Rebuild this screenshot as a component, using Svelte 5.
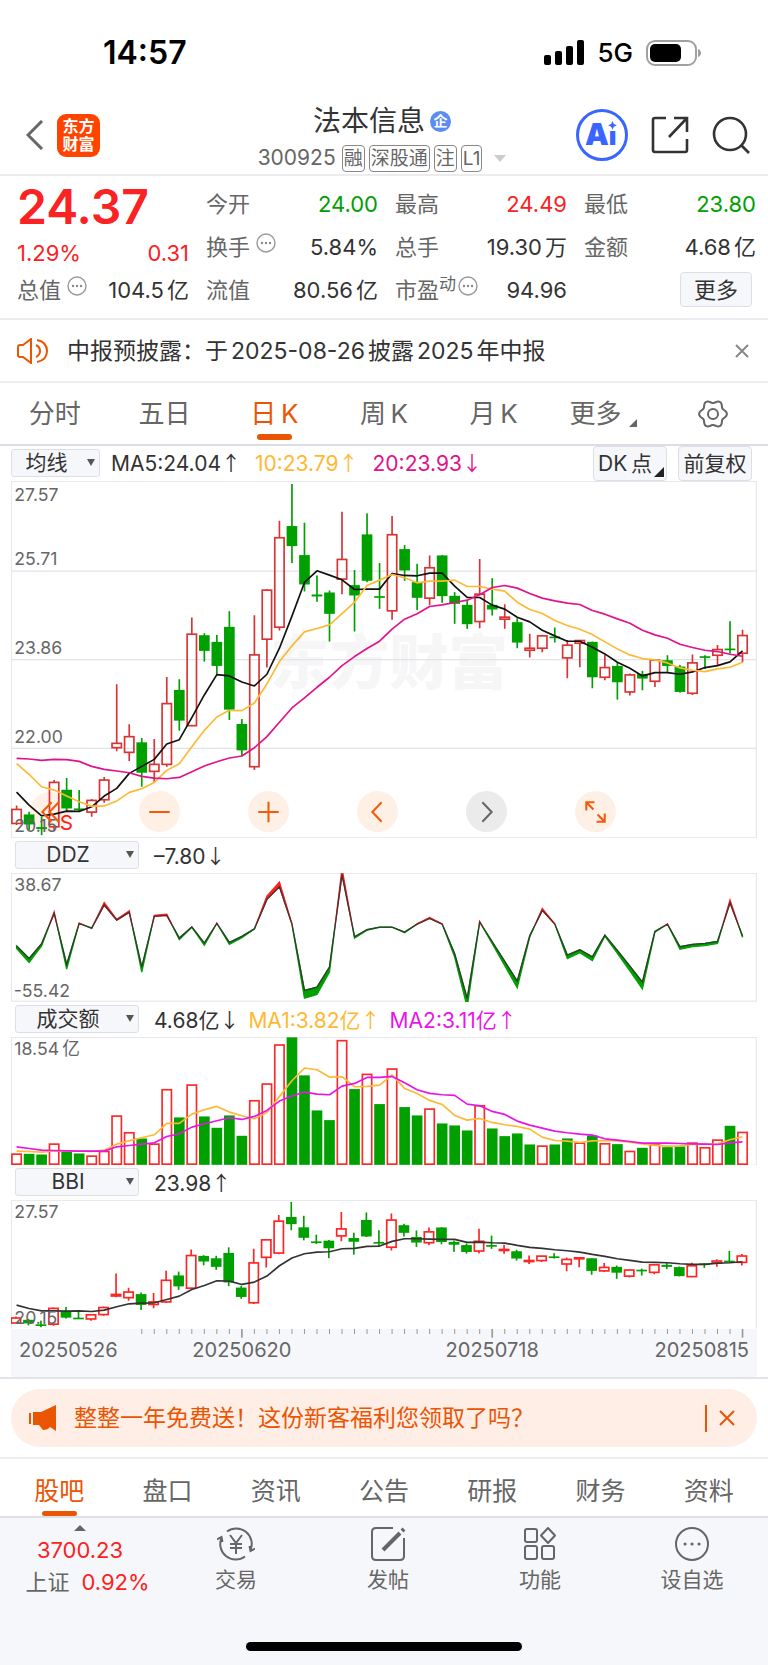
<script lang="ts">
    const STEP = 37.5;
    const START = 51.7;
    const x = (i: number) => START + i * STEP;

    // high, body top, body bottom, low in plot units; up = hollow red
    type Candle = [number, number, number, number, "up" | "down"];
    const candles: Candle[] = [
        [991, 1003, 1045, 1050, "up"], [1010, 1018, 1048, 1065, "down"], [1025, 1056, 1062, 1080, "down"],
        [915, 922, 1055, 1068, "up"], [909, 944, 1000, 1008, "down"], [945, 1000, 1004, 1008, "down"],
        [972, 976, 1011, 1025, "up"], [906, 915, 974, 983, "up"], [628, 805, 818, 829, "up"],
        [748, 785, 832, 858, "up"], [789, 802, 893, 935, "down"], [792, 868, 889, 921, "up"],
        [606, 686, 868, 875, "up"], [613, 645, 737, 767, "down"], [428, 478, 752, 754, "up"],
        [475, 481, 528, 560, "down"], [480, 501, 573, 598, "down"], [409, 456, 704, 735, "down"],
        [732, 747, 826, 842, "down"], [421, 540, 875, 885, "up"], [343, 346, 493, 578, "up"],
        [138, 189, 457, 467, "up"], [28, 154, 214, 265, "down"], [144, 241, 329, 350, "down"],
        [302, 359, 365, 381, "down"], [347, 353, 417, 500, "down"], [111, 254, 313, 358, "up"],
        [286, 331, 362, 470, "down"], [116, 179, 318, 322, "down"], [265, 364, 369, 402, "down"],
        [124, 180, 408, 435, "up"], [211, 223, 287, 318, "down"], [267, 322, 369, 406, "down"],
        [242, 279, 370, 391, "up"], [241, 242, 364, 384, "down"], [352, 363, 387, 447, "down"],
        [376, 390, 448, 462, "down"], [253, 358, 440, 460, "up"], [310, 390, 404, 422, "down"],
        [388, 427, 433, 462, "up"], [430, 442, 503, 520, "down"], [477, 520, 526, 548, "up"],
        [480, 483, 520, 532, "up"], [458, 485, 489, 503, "down"], [495, 511, 549, 610, "up"],
        [495, 497, 505, 577, "up"], [500, 501, 607, 640, "down"], [540, 578, 607, 616, "up"],
        [562, 573, 622, 674, "down"], [596, 600, 651, 662, "up"], [588, 597, 611, 646, "down"],
        [553, 556, 619, 636, "up"], [541, 556, 573, 592, "down"], [570, 575, 651, 653, "down"],
        [539, 564, 655, 660, "up"], [541, 544, 548, 582, "down"], [510, 524, 541, 572, "up"],
        [439, 521, 525, 536, "down"], [465, 482, 535, 562, "up"]
    ];

    const ma5 = [951, 990, 1022, 1017, 1008, 1009, 995, 963, 940, 895, 874, 853, 807, 794, 728, 660, 599, 603, 621, 633, 598, 520, 424, 323, 288, 301, 315, 344, 343, 343, 296, 302, 303, 295, 295, 334, 368, 368, 391, 403, 427, 441, 466, 483, 499, 499, 517, 537, 562, 580, 603, 593, 593, 598, 591, 578, 572, 561, 528];
    const ma10 = [866, 898, 935, 945, 963, 980, 993, 993, 978, 952, 941, 922, 886, 866, 815, 766, 726, 706, 707, 684, 627, 560, 513, 471, 461, 450, 416, 382, 332, 316, 299, 309, 324, 319, 319, 316, 335, 335, 343, 349, 382, 404, 416, 437, 452, 463, 479, 501, 522, 540, 551, 555, 564, 579, 586, 590, 582, 577, 562];
    const ma20 = [850, 852, 856, 853, 854, 859, 874, 883, 888, 893, 904, 909, 911, 907, 890, 873, 860, 849, 843, 818, 785, 742, 699, 669, 637, 607, 572, 545, 521, 499, 463, 433, 417, 395, 390, 383, 376, 360, 338, 332, 340, 356, 370, 378, 385, 389, 407, 418, 432, 445, 466, 480, 490, 508, 518, 526, 530, 538, 544];
    const ddz = [320, 357, 313, 222, 375, 252, 266, 197, 242, 219, 383, 231, 228, 296, 263, 311, 252, 309, 291, 268, 180, 142, 254, 453, 443, 383, 106, 292, 271, 263, 263, 278, 254, 237, 254, 343, 477, 248, 307, 366, 425, 289, 213, 254, 347, 331, 352, 287, 333, 380, 428, 276, 254, 322, 315, 312, 306, 190, 290];
    // negative = falling day
    const volume = [941, -940, -942, 911, -933, -939, 947, 933, 827, 877, -894, 911, 748, -831, 734, -828, -862, -825, -886, 781, 731, 614, -591, -705, -810, -839, 601, -746, 702, -791, 686, -800, -825, 806, -849, -855, -870, 796, -864, -887, -879, -912, 917, -912, -894, 908, -885, 910, -911, 933, -922, 914, -920, -918, 908, 922, 899, -856, 876];
    const volMa1 = [932, 933, 935, 931, 932, 932, 933, 929, 911, 901, 892, 883, 849, 849, 821, 808, 798, 815, 826, 835, 816, 768, 721, 683, 688, 710, 709, 739, 738, 734, 704, 744, 759, 780, 792, 825, 839, 834, 846, 853, 858, 866, 890, 900, 902, 906, 901, 900, 901, 905, 910, 915, 917, 916, 912, 911, 910, 898, 889];
    const volMa2 = [919, 924, 929, 930, 931, 932, 932, 932, 919, 915, 911, 907, 888, 880, 860, 850, 841, 832, 837, 828, 810, 782, 767, 755, 761, 763, 737, 729, 711, 711, 708, 727, 748, 759, 763, 765, 791, 796, 813, 822, 842, 854, 863, 872, 877, 881, 884, 895, 899, 903, 908, 908, 908, 909, 910, 911, 912, 907, 904];
    const bbi = [419, 429, 436, 436, 437, 436, 438, 434, 424, 415, 413, 412, 402, 392, 372, 360, 346, 347, 357, 350, 332, 301, 278, 265, 260, 259, 250, 249, 243, 242, 228, 220, 220, 221, 222, 222, 231, 230, 232, 233, 240, 246, 249, 253, 256, 260, 267, 273, 280, 285, 290, 291, 292, 295, 297, 297, 293, 292, 289];

    const line = (values: number[]) => values.map((v, i) => `${x(i)},${v}`).join(" ");

    // DDZ: band between the line and its exaggerated copy around zero
    const ZERO = 259;
    const ddzFar = ddz.map((v) => v + (v - ZERO) * 0.12);
    const ddzBand =
        line(ddz) + " " + ddzFar.map((v, i) => `${x(i)},${v}`).reverse().join(" ");

    const small = (v: number) => 110 + (v - 28) * 0.3565;
    const bbiCandles = candles.map(([h, t, b, l, dir]) => [small(h), small(t), small(b), small(l), dir] as Candle);

    // six-lobed outline of the settings icon
    const gear = Array.from({ length: 72 }, (_, k) => {
        const a = (k * Math.PI) / 36;
        const r = 12.4 + 1.5 * Math.cos(6 * a);
        return `${(15 + r * Math.cos(a)).toFixed(1)},${(15 + r * Math.sin(a)).toFixed(1)}`;
    }).join(" ");

    const priceLabels = [
        { y: 78, text: "27.57" },
        { y: 270, text: "25.71" },
        { y: 537, text: "23.86" },
        { y: 804, text: "22.00" },
        { y: 1071, text: "20.15" }
    ];

    const quotes = [
        { label: "今开", value: "24.00", color: "green" },
        { label: "最高", value: "24.49", color: "red" },
        { label: "最低", value: "23.80", color: "green" },
        { label: "换手", value: "5.84%", info: true },
        { label: "总手", value: "19.30", unit: "万" },
        { label: "金额", value: "4.68", unit: "亿" },
        { label: "流值", value: "80.56", unit: "亿" },
        { label: "市盈", sup: "动", value: "94.96", info: true }
    ];

    const periods = ["分时", "五日", "日\u2009K", "周\u2009K", "月\u2009K", "更多"];
    const sections = ["股吧", "盘口", "资讯", "公告", "研报", "财务", "资料"];
    const tags = ["融", "深股通", "注", "L1"];
    let period = $state(periods[2]);
    let section = $state("股吧");
    let showNotice = $state(true);
    let showPromo = $state(true);
</script>

{#snippet dots()}
    <svg class="dots" viewBox="0 0 20 20" aria-hidden="true">
        <circle cx="10" cy="10" r="9" fill="none" stroke="#999" stroke-width="1.4" />
        <circle cx="6" cy="10" r="1.2" fill="#888" />
        <circle cx="10" cy="10" r="1.2" fill="#888" />
        <circle cx="14" cy="10" r="1.2" fill="#888" />
    </svg>
{/snippet}

{#snippet sticks(list: Candle[], red: string, shift: number)}
    {#each list as [high, top, bottom, low, dir], i}
        {#if dir == "up"}
            <g stroke={red} stroke-width="5" fill="none">
                <path d="M{x(i) + shift} {high}V{top}M{x(i) + shift} {bottom}V{low}" />
                <rect x={x(i) + shift - 14} y={top} width="28" height={Math.max(bottom - top, 3)} />
            </g>
        {:else}
            <g fill="#00a000">
                <rect x={x(i) + shift - 2.5} y={high} width="5" height={low - high} />
                <rect x={x(i) + shift - 16} y={top} width="32" height={Math.max(bottom - top, 5)} />
            </g>
        {/if}
    {/each}
{/snippet}

<div class="phone">
    <div class="status">
        <span class="clock">14:57</span>
        <div class="signals">
            <svg width="40" height="25" viewBox="0 0 40 25" aria-hidden="true">
                <rect x="0" y="15" width="7" height="10" rx="2" />
                <rect x="11" y="11" width="7" height="14" rx="2" />
                <rect x="22" y="6" width="7" height="19" rx="2" />
                <rect x="33" y="0" width="7" height="25" rx="2" />
            </svg>
            <span class="network">5G</span>
            <svg width="56" height="26" viewBox="0 0 56 26" aria-hidden="true">
                <rect x="1" y="1" width="49" height="24" rx="8" fill="none" stroke="#a0a0a0" stroke-width="2" />
                <rect x="4" y="4" width="31" height="18" rx="5" />
                <path d="M52 9c4 1 4 7 0 8z" fill="#a0a0a0" />
            </svg>
        </div>
    </div>

    <header class="nav">
        <div class="nav-left">
            <button aria-label="返回">
                <svg width="18" height="30" viewBox="0 0 18 30"><path d="M16 1 2 15l14 14" fill="none" stroke="#666" stroke-width="3" /></svg>
            </button>
            <a class="logo" href="#home">东方<br />财富</a>
        </div>
        <div class="title">
            <h1>法本信息<span class="badge">企</span></h1>
            <div class="code">
                <span class="number">300925</span>
                {#each tags as tag}
                    <span class="tag">{tag}</span>
                {/each}
                <i class="caret"></i>
            </div>
        </div>
        <div class="nav-right">
            <button aria-label="Ai">
                <svg width="52" height="52" viewBox="0 0 52 52">
                    <circle cx="26" cy="26" r="24.500" fill="none" stroke="#3a66ff" stroke-width="3" />
                    <text x="9" y="36" class="ai">A<tspan class="stem">ı</tspan></text>
                    <path d="M36.500 12l1.400 2.900 2.900 1.400-2.900 1.400-1.400 2.900-1.400-2.900-2.900-1.400 2.900-1.400z" fill="#3a66ff" />
                </svg>
            </button>
            <button aria-label="分享">
                <svg width="38" height="38" viewBox="0 0 38 38" fill="none" stroke="#333" stroke-width="2.600">
                    <path d="M15 2H4Q2 2 2 4V34Q2 36 4 36H34Q36 36 36 34V23M23 2H36V16M36 2 18 21" />
                </svg>
            </button>
            <button aria-label="搜索">
                <svg width="38" height="38" viewBox="0 0 38 38" fill="none" stroke="#333" stroke-width="2.600">
                    <circle cx="18" cy="18" r="16" />
                    <path d="M29 29 37 37" />
                </svg>
            </button>
        </div>
    </header>

    <section class="quote">
        <div class="last">
            <strong>24.37</strong>
            <div class="pair red"><span>1.29%</span><span>0.31</span></div>
            <div class="pair"><span class="label">总值{@render dots()}</span><span>104.5<small>亿</small></span></div>
        </div>
        <div class="stats">
            {#each quotes as q}
                <div class="pair">
                    <span class="label">{q.label}{#if q.sup}<sup>{q.sup}</sup>{/if}{#if q.info}{@render dots()}{/if}</span>
                    <span class={q.color}>{q.value}{#if q.unit}<small>{q.unit}</small>{/if}</span>
                </div>
            {/each}
            <button class="more">更多</button>
        </div>
    </section>

    {#if showNotice}
        <div class="notice">
            <svg width="32" height="26" viewBox="0 0 32 26" fill="none" stroke="#ea5504" stroke-width="2" aria-hidden="true">
                <path d="M14 1 6 7H3Q1 7 1 9V17Q1 19 3 19H6L14 25ZM19 7Q23 9 23 13T19 19M20 2Q30 4 30 13T20 24" />
            </svg>
            <p>中报预披露：于<span>2025-08-26</span>披露<span>2025</span>年中报</p>
            <button aria-label="关闭公告" onclick={() => (showNotice = false)}>
                <svg width="14" height="14" viewBox="0 0 14 14"><path d="M1 1 13 13M13 1 1 13" stroke="#888" stroke-width="2" /></svg>
            </button>
        </div>
    {/if}

    <nav class="periods">
        {#each periods as p}
            <button class:active={period == p} onclick={() => (period = p)}>
                {p}{#if p == "更多"}<i class="corner"></i>{/if}
            </button>
        {/each}
        <button aria-label="设置">
            <svg width="30" height="30" viewBox="0 0 30 30" fill="none" stroke="#666" stroke-width="2">
                <polygon points={gear} stroke-linejoin="round" />
                <circle cx="15" cy="15" r="5" />
            </svg>
        </button>
    </nav>

    <div class="toolbar">
        <span class="drop">
            <select aria-label="主图指标"><option>均线</option></select>
        </span>
        <span class="reading">MA5:24.04<b>↑</b></span>
        <span class="reading orange">10:23.79<b>↑</b></span>
        <span class="reading pink">20:23.93<b>↓</b></span>
        <button class="chip dk">DK{"\u2009"}点<i class="corner"></i></button>
        <button class="chip">前复权</button>
    </div>

    <div class="panel">
        <svg class="plot" viewBox="35 19 2235 1071" role="img" aria-label="日K线">
            <text class="watermark" x="812" y="628">东方财富</text>
            <path d="M35 289H2270M35 554H2270M35 820H2270" stroke="#dfe3ec" stroke-width="4" />
            <rect class="frame" x="36" y="20" width="2232" height="1068" />
            <circle cx="152" cy="1011" r="61" fill="#fff0e8" />
            {@render sticks(candles, "#d83434", 0)}
            <polyline class="ma" points={line(ma5)} stroke="#111" />
            <polyline class="ma" points={line(ma10)} stroke="#ffb833" />
            <polyline class="ma" points={line(ma20)} stroke="#e0128c" />
            {#each priceLabels as l}
                <text class="axis" x="45" y={l.y}>{l.text}</text>
            {/each}
            <text class="sell" x="181" y="1065">S</text>
        </svg>
        <div class="controls">
            <button class="ghost" aria-label="最左"><svg viewBox="0 0 40 40"><path d="M21 11 12 20.500 21 30M28 11 19 20.500 28 30" /></svg></button>
            <button aria-label="缩小"><svg viewBox="0 0 40 40"><path d="M10 20.500H30" /></svg></button>
            <button aria-label="放大"><svg viewBox="0 0 40 40"><path d="M10 20.500H30M20 10.500V30.500" /></svg></button>
            <button aria-label="左移"><svg viewBox="0 0 40 40"><path d="M24 11 15 20.500 24 30" /></svg></button>
            <button class="off" aria-label="右移"><svg viewBox="0 0 40 40"><path d="M16 11 25 20.500 16 30" /></svg></button>
            <button aria-label="全屏"><svg viewBox="0 0 40 40"><path d="M19 11H11V19M11 11 18 18M21 30H29V22M29 30 22 23" /></svg></button>
        </div>
    </div>

    <div class="sub">
        <span class="drop wide"><select aria-label="副图一"><option>DDZ</option></select></span>
        <span class="reading">–7.80<b>↓</b></span>
    </div>
    <div class="panel">
        <svg class="plot" viewBox="35 101 2235 385" role="img" aria-label="DDZ">
            <defs>
                <linearGradient id="ddz" gradientUnits="userSpaceOnUse" x1="0" x2="0" y1="101" y2="486">
                    <stop offset="0.41" stop-color="#ff2020" />
                    <stop offset="0.41" stop-color="#00a000" />
                </linearGradient>
            </defs>
            <rect class="frame" x="36" y="102" width="2232" height="383" />
            <polygon points={ddzBand} fill="url(#ddz)" stroke="url(#ddz)" stroke-width="4" />
            <polyline points={line(ddz)} fill="none" stroke="#333" stroke-width="4" stroke-opacity="0.9" />
            <text class="axis" x="45" y="154">38.67</text>
            <text class="axis" x="43" y="472">-55.42</text>
        </svg>
    </div>

    <div class="sub">
        <span class="drop wide"><select aria-label="副图二"><option>成交额</option></select></span>
        <span class="reading">4.68亿<b>↓</b></span>
        <span class="reading orange">MA1:3.82亿<b>↑</b></span>
        <span class="reading magenta">MA2:3.11亿<b>↑</b></span>
    </div>
    <div class="panel">
        <svg class="plot" viewBox="35 590 2235 385" role="img" aria-label="成交额">
            <rect class="frame" x="36" y="591" width="2232" height="383" />
            {#each volume as v, i}
                {#if v > 0}
                    <rect x={x(i) - 14} y={v} width="28" height={971 - v} fill="#fff" stroke="#f92a2a" stroke-width="5" />
                {:else}
                    <rect x={x(i) - 16} y={-v} width="32" height={973 + v} fill="#00a000" />
                {/if}
            {/each}
            <polyline class="ma" points={line(volMa1)} stroke="#ffb833" />
            <polyline class="ma" points={line(volMa2)} stroke="#e815e8" />
            <text class="axis" x="45" y="644">18.54{"\u2009"}亿</text>
        </svg>
    </div>

    <div class="sub">
        <span class="drop wide"><select aria-label="副图三"><option>BBI</option></select></span>
        <span class="reading">23.98<b>↑</b></span>
    </div>
    <div class="panel">
        <svg class="plot" viewBox="35 104 2235 385" role="img" aria-label="BBI">
            <path d="M36 489V105H2268V489" fill="none" stroke="#e2e4ea" stroke-width="3" />
            {@render sticks(bbiCandles, "#ff2424", -2)}
            <polyline class="ma" points={line(bbi)} stroke="#333" />
            <text class="axis" x="45" y="158">27.57</text>
            <text class="axis" x="45" y="477">20.15</text>
        </svg>
        <svg class="dates" viewBox="35 0 2235 144" role="img" aria-label="日期">
            {#each candles as _, i}
                {#if i > 9}
                    <path d="M{x(i)} 0V{i % 20 == 18 ? 26 : 15}" stroke="#999" stroke-width={i % 20 == 18 ? 5 : 3} />
                {/if}
            {/each}
            <text x="59" y="83">20250526</text>
            <text x={x(18)} y="83" text-anchor="middle">20250620</text>
            <text x={x(38)} y="83" text-anchor="middle">20250718</text>
            <text x="2246" y="83" text-anchor="end">20250815</text>
        </svg>
    </div>

    {#if showPromo}
        <div class="promo-wrap">
            <div class="promo">
                <svg width="28" height="26" viewBox="0 0 28 26" fill="#ea5504" aria-hidden="true">
                    <path d="M0 8H2V19H0ZM4 7H12L27 0V26L21 22Q19 25 14 25L10 20H4Z" />
                </svg>
                <a href="#promo">整整一年免费送！这份新客福利您领取了吗？</a>
                <button aria-label="关闭" onclick={() => (showPromo = false)}>
                    <svg width="16" height="16" viewBox="0 0 16 16"><path d="M1 1 15 15M15 1 1 15" stroke="#ea5504" stroke-width="2" /></svg>
                </button>
            </div>
        </div>
    {/if}

    <nav class="sections">
        {#each sections as s}
            <button class:active={section == s} onclick={() => (section = s)}>{s}</button>
        {/each}
    </nav>

    <footer>
        <div class="actions">
            <a class="index" href="#index">
                <i class="up"></i>
                <span>3700.23</span>
                <span class="change"><em>上证</em>0.92%</span>
            </a>
            <a href="#trade">
                <svg viewBox="0 0 38 36">
                    <path d="M10 5.500A15.500 15.500 0 0 1 33.500 24M28 30.500A15.500 15.500 0 0 1 4.500 12M0 13.500 4.500 11 5.500 16M38 22.500 33.500 25 32.500 20" />
                    <path d="M13 9 19 17 25 9M19 17V28M13 18H25M13 22H25" />
                </svg>
                <span>交易</span>
            </a>
            <a href="#post">
                <svg viewBox="0 0 38 36">
                    <path d="M24 2H7Q3 2 3 6V30Q3 34 7 34H31Q35 34 35 30V12" />
                    <path d="M14 24 31 7M33 5 35 3" stroke-width="4" />
                </svg>
                <span>发帖</span>
            </a>
            <a href="#tools">
                <svg viewBox="0 0 38 36">
                    <rect x="4" y="3" width="12" height="13" rx="2" />
                    <rect x="4" y="20" width="12" height="13" rx="2" />
                    <rect x="21" y="20" width="12" height="13" rx="2" />
                    <path d="M27 2 34 9.500 27 17 20 9.500Z" stroke-linejoin="round" />
                </svg>
                <span>功能</span>
            </a>
            <a href="#watch">
                <svg viewBox="0 0 38 36">
                    <circle cx="19" cy="18" r="16" />
                    <path d="M12 18h.1M19 18h.1M26 18h.1" stroke-width="3" stroke-linecap="round" />
                </svg>
                <span>设自选</span>
            </a>
        </div>
        <div class="home"></div>
    </footer>
</div>

<style>
    :global(body) {
        background: #fff;
    }

    .phone {
        font-family: Inter, "Noto Sans CJK SC", sans-serif;
        font-size: 22px;
        line-height: 30px;
        color: #333;
        overflow: hidden;
    }

    .phone * {
        box-sizing: border-box;
    }

    button {
        padding: 0;
        border: 0;
        background: none;
        font: inherit;
        color: inherit;
        cursor: pointer;
    }

    a {
        color: inherit;
        text-decoration: none;
    }

    svg {
        display: block;
    }

    .red {
        color: #fa2222;
    }

    .green {
        color: #00a000;
    }

    .orange {
        color: #ffb833;
    }

    .pink {
        color: #e0128c;
    }

    .magenta {
        color: #e815e8;
    }

    .status {
        display: flex;
        justify-content: space-between;
        align-items: center;
        height: 96px;
        padding: 9px 66px 0 103px;
        color: #000;
    }

    .clock {
        font-size: 32px;
        font-weight: 600;
    }

    .signals {
        display: flex;
        align-items: center;
        gap: 13px;
    }

    .network {
        font-size: 26px;
        font-weight: 500;
    }

    .nav {
        display: grid;
        grid-template-columns: 1fr auto 1fr;
        align-items: center;
        height: 80px;
        padding: 0 18px 0 26px;
        border-bottom: 2px solid #ececee;
    }

    .nav-left {
        display: flex;
        align-items: center;
        gap: 13px;
    }

    .logo {
        width: 43px;
        height: 43px;
        padding-top: 3px;
        border-radius: 9px;
        background: #ff4400;
        color: #fff;
        font-size: 16px;
        font-weight: 700;
        line-height: 18px;
        text-align: center;
    }

    .title {
        padding: 4px 12px 0 0;
    }

    h1 {
        display: flex;
        justify-content: center;
        align-items: center;
        gap: 5px;
        margin: 0 0 2px;
        font-size: 28px;
        font-weight: 400;
        line-height: 40px;
    }

    .badge {
        width: 21px;
        height: 21px;
        border-radius: 50%;
        background: #5b8def;
        color: #fff;
        font-size: 14px;
        font-weight: 700;
        line-height: 20px;
        text-align: center;
    }

    .code {
        display: flex;
        align-items: center;
        gap: 4px;
        color: #666;
    }

    .number {
        margin-right: 2px;
        font-size: 21px;
    }

    .tag {
        height: 27px;
        padding: 0 1px;
        border: 1px solid #888;
        border-radius: 4px;
        font-size: 19px;
        line-height: 25px;
    }

    .caret {
        margin-left: 8px;
        border: 6px solid transparent;
        border-top: 7px solid #ccc;
        border-bottom: 0;
    }

    .nav-right {
        display: flex;
        justify-content: flex-end;
        align-items: center;
        gap: 23px;
    }

    .ai {
        fill: #3a66ff;
        font-size: 30px;
        font-weight: 900;
    }

    .stem {
        font-size: 26px;
    }

    .quote {
        display: grid;
        grid-template-columns: repeat(4, minmax(0, 1fr));
        gap: 17px;
        height: 144px;
        padding: 6px 12px 0 17px;
        border-bottom: 2px solid #ececee;
    }

    .last {
        display: grid;
        grid-template-rows: 50px 37px 43px;
    }

    .last strong {
        color: #fa2222;
        font-size: 48px;
        font-weight: 600;
        line-height: 50px;
    }

    .stats {
        grid-column: span 3;
        display: grid;
        grid-template-columns: repeat(3, minmax(0, 1fr));
        grid-template-rows: repeat(3, 43px);
        column-gap: 17px;
    }

    .pair {
        display: flex;
        justify-content: space-between;
        align-items: center;
        white-space: nowrap;
    }

    .last .pair {
        height: 41px;
    }

    .label {
        display: flex;
        align-items: center;
        color: #666;
    }

    .label sup {
        align-self: flex-start;
        font-size: 17px;
        line-height: 18px;
    }

    .dots {
        width: 20px;
        height: 20px;
        margin: 0 0 8px 6px;
    }

    sup + .dots {
        margin-left: 2px;
    }

    .pair small {
        margin-left: 3px;
        font-size: 22px;
    }

    .more {
        justify-self: end;
        align-self: center;
        width: 72px;
        height: 35px;
        margin-right: 4px;
        border: 1px solid #dcdfe5;
        border-radius: 4px;
        background: #f6f7fa;
    }

    .notice {
        display: flex;
        align-items: center;
        height: 63px;
        padding: 0 19px 0 17px;
        border-bottom: 2px solid #ececee;
    }

    .notice p {
        flex: 1;
        margin: 0 0 0 18px;
        font-size: 23px;
    }

    .notice span {
        margin: 0 3px;
    }

    .periods {
        display: grid;
        grid-template-columns: repeat(7, 1fr);
        height: 63px;
        border-bottom: 2px solid #dcdce4;
        color: #666;
        font-size: 26px;
    }

    .periods button,
    .sections button {
        display: flex;
        justify-content: center;
        align-items: center;
        position: relative;
    }

    .periods .active,
    .sections .active {
        color: #ea5504;
    }

    .active::after {
        content: "";
        position: absolute;
        bottom: 4px;
        width: 35px;
        height: 6px;
        border-radius: 3px;
        background: #ea5504;
    }

    .corner {
        align-self: flex-end;
        border-left: 8px solid transparent;
        border-bottom: 8px solid #666;
    }

    .periods .corner {
        margin: 0 0 17px 8px;
    }

    .toolbar,
    .sub {
        display: flex;
        align-items: center;
        height: 35px;
        white-space: nowrap;
    }

    .toolbar {
        padding: 0 16px 0 11px;
    }

    .sub {
        padding: 0 15px;
    }

    .drop {
        position: relative;
        width: 89px;
        height: 28px;
        margin: 0 11px 1px 0;
    }

    .drop.wide {
        width: 124px;
        margin-right: 15px;
    }

    .drop::after {
        content: "";
        position: absolute;
        top: 10px;
        right: 5px;
        border: 4px solid transparent;
        border-top: 7px solid #555;
        border-bottom: 0;
        pointer-events: none;
    }

    select {
        display: block;
        width: 100%;
        height: 100%;
        padding: 0 18px 0 0;
        border: 1px solid #dcdfe5;
        border-radius: 3px;
        background: #f6f7fa;
        appearance: none;
        color: #333;
        font: 21px/26px Inter, "Noto Sans CJK SC", sans-serif;
        text-align: center;
        text-align-last: center;
    }

    .reading {
        margin-right: 14px;
        font-size: 21px;
    }

    .sub .reading {
        margin: 2px 9px 0 0;
    }

    .reading b {
        font-family: "Noto Sans CJK SC", sans-serif;
        font-size: 20px;
        font-weight: 400;
    }

    .chip {
        height: 35px;
        width: 74px;
        border: 1px solid #dcdfe5;
        border-radius: 4px;
        background: #f6f7fa;
        font-size: 21px;
    }

    .dk {
        display: flex;
        align-items: center;
        margin: 0 11px 0 auto;
        padding-left: 4px;
    }

    .dk .corner {
        margin: 0 2px 3px auto;
        border-left-width: 10px;
        border-bottom: 10px solid #222;
    }

    .panel {
        position: relative;
        margin: 0 11px;
    }

    .plot {
        width: 100%;
    }

    .frame {
        fill: none;
        stroke: #e2e4ea;
        stroke-width: 3;
    }

    .ma {
        fill: none;
        stroke-width: 5;
        stroke-linejoin: round;
    }

    .axis {
        fill: #666;
        font-size: 53px;
    }

    .watermark {
        fill: #f6f6f7;
        font-size: 178px;
        font-weight: 900;
    }

    .sell {
        fill: #ff1a1a;
        font-size: 62px;
    }

    .controls {
        position: absolute;
        left: 19px;
        bottom: 6px;
        display: flex;
        gap: 68px;
    }

    .controls button {
        width: 41px;
        height: 41px;
        border-radius: 50%;
        background: rgba(255, 233, 220, 0.7);
    }

    .controls svg {
        fill: none;
        stroke: #f55a0a;
        stroke-width: 2;
    }

    .controls .ghost {
        background: none;
    }

    .controls .off {
        background: #ebebeb;
    }

    .off svg {
        stroke: #666;
    }

    .dates {
        width: 100%;
        background: #f6f7fa;
        fill: #666;
        font-size: 60px;
    }

    .promo-wrap {
        padding: 10px 11px;
        border-top: 2px solid #e2e4ea;
        border-bottom: 2px solid #ececee;
    }

    .promo {
        display: flex;
        align-items: center;
        height: 58px;
        padding: 0 10px 0 18px;
        border-radius: 29px;
        background: #feeee6;
        color: #ea5504;
        font-size: 23px;
    }

    .promo a {
        flex: 1;
        margin-left: 17px;
    }

    .promo button {
        height: 27px;
        padding: 0 12px;
        border-left: 2px solid #ea5504;
    }

    .sections {
        display: grid;
        grid-template-columns: repeat(7, 1fr);
        height: 59px;
        padding: 0 5px;
        border-bottom: 2px solid #dcdfe5;
        color: #666;
        font-size: 25px;
    }

    .sections button {
        padding-top: 6px;
    }

    .sections .active::after {
        bottom: 0;
        height: 5px;
    }

    footer {
        padding-bottom: 18px;
        background: #f6f7fa;
    }

    .actions {
        display: grid;
        grid-template-columns: 160px repeat(4, 1fr);
        height: 124px;
    }

    .actions a {
        display: flex;
        flex-direction: column;
        align-items: center;
        padding-top: 8px;
        color: #666;
        font-size: 21px;
    }

    .actions svg {
        width: 38px;
        height: 36px;
        margin-bottom: 3px;
        fill: none;
        stroke: #666;
        stroke-width: 2;
    }

    .actions .index {
        padding-top: 7px;
        color: #fa2222;
        font-size: 22px;
        line-height: 32px;
    }

    .change {
        padding-left: 15px;
    }

    .index em {
        margin-right: 12px;
        color: #666;
        font-style: normal;
    }

    .up {
        margin-bottom: 3px;
        border: 6px solid transparent;
        border-top: 0;
        border-bottom: 6px solid #666;
    }

    .home {
        width: 36%;
        height: 9px;
        margin: 0 auto;
        border-radius: 5px;
        background: #000;
    }
</style>
